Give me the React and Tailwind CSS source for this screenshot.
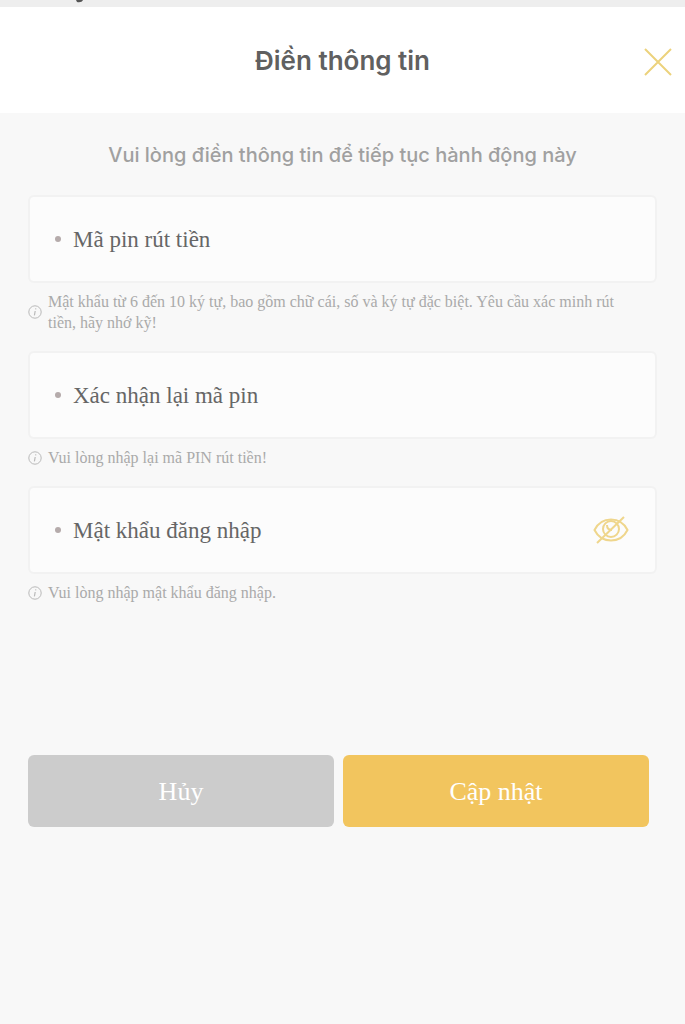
import { useState } from "react";

const serif = "font-['Liberation_Serif',serif]";

const fields = [
  {
    id: "pin",
    label: "Mã pin rút tiền",
    hint: "Mật khẩu từ 6 đến 10 ký tự, bao gồm chữ cái, số và ký tự đặc biệt. Yêu cầu xác minh rút tiền, hãy nhớ kỹ!",
  },
  {
    id: "pin-confirm",
    label: "Xác nhận lại mã pin",
    hint: "Vui lòng nhập lại mã PIN rút tiền!",
  },
  {
    id: "password",
    label: "Mật khẩu đăng nhập",
    hint: "Vui lòng nhập mật khẩu đăng nhập.",
    toggle: true,
  },
];

function CloseIcon() {
  return (
    <svg width="30" height="30" viewBox="0 0 30 30" fill="none" stroke="#ecd27c" strokeWidth="2">
      <path d="M2 2 28 28M28 2 2 28" />
    </svg>
  );
}

function InfoIcon() {
  return (
    <svg className="shrink-0" width="14" height="14" viewBox="0 0 14 14" fill="none" stroke="#b9b9b9">
      <circle cx="7" cy="7" r="6.2" />
      <path d="M7.8 3.4 7.6 4.4M7.2 6 6.4 10.4" strokeWidth="1.2" />
    </svg>
  );
}

function EyeOffIcon() {
  return (
    <svg width="36" height="30" viewBox="0 0 36 30" fill="none" stroke="#efd68c" strokeWidth="2">
      <path d="M1.5 15C5 8 11 4.5 18 4.5S31 8 34.500 15C31 22 25 25.500 18 25.500S5 22 1.500 15Z" />
      <circle cx="18" cy="14" r="8" />
      <path d="M14 10c0 3 2 5 5 5" />
      <path d="M31 2 4 28" />
    </svg>
  );
}

function Field({ id, label, hint, toggle }) {
  const [visible, setVisible] = useState(false);

  return (
    <div className="mb-[18px]">
      <div className="flex h-[88px] items-center rounded-md border-2 border-[#f2f2f2] bg-[#fcfcfc] pl-[25px] pr-[26px]">
        <span className="mr-3 h-[6px] w-[6px] rounded-full bg-[#b5abab]" />
        <label htmlFor={id} className={`${serif} pt-[2px] text-[23px] text-[#666]`}>
          {label}
        </label>
        <input
          id={id}
          type={visible ? "text" : "password"}
          aria-describedby={`${id}-hint`}
          className="mx-3 h-full min-w-0 flex-1 bg-transparent outline-none"
        />
        {toggle && (
          <button type="button" aria-label="Hiện mật khẩu" onClick={() => setVisible(!visible)}>
            <EyeOffIcon />
          </button>
        )}
      </div>

      <div className="mt-2 flex items-center gap-[6px] pr-4">
        <InfoIcon />
        <p id={`${id}-hint`} className={`${serif} text-[16px] leading-[21px] text-[#aaa]`}>
          {hint}
        </p>
      </div>
    </div>
  );
}

export default function App() {
  return (
    <div className="min-h-screen bg-[#f8f8f8] font-['Inter',sans-serif]">
      {/* Strip of the page behind the sheet */}
      <div className="h-[7px] bg-[#eee] pl-[76px]">
        <svg width="8" height="3" viewBox="0 0 8 3" fill="#555">
          <path d="M0 0H7C6 2 4 2.500 1 2Z" />
        </svg>
      </div>

      {/* Header */}
      <header className="grid h-[106px] grid-cols-[1fr_auto_1fr] items-center bg-white px-3">
        <h1 className="col-start-2 text-[26px] font-semibold text-[#606060]">Điền thông tin</h1>
        <button type="button" aria-label="Đóng" className="justify-self-end pt-1">
          <CloseIcon />
        </button>
      </header>

      <form className="px-7" onSubmit={(e) => e.preventDefault()}>
        <p className="pb-[26px] pt-7 text-center text-[20px] font-medium leading-7 text-[#a0a0a0]">
          Vui lòng điền thông tin để tiếp tục hành động này
        </p>

        {fields.map((field) => (
          <Field key={field.id} {...field} />
        ))}

        {/* Actions */}
        <div className={`mr-2 mt-[152px] grid grid-cols-2 gap-[9px] text-[26px] text-white ${serif}`}>
          <button type="button" className="h-[72px] rounded-md bg-[#ccc]">
            Hủy
          </button>
          <button type="submit" className="h-[72px] rounded-md bg-[#f2c55e]">
            Cập nhật
          </button>
        </div>
      </form>
    </div>
  );
}
